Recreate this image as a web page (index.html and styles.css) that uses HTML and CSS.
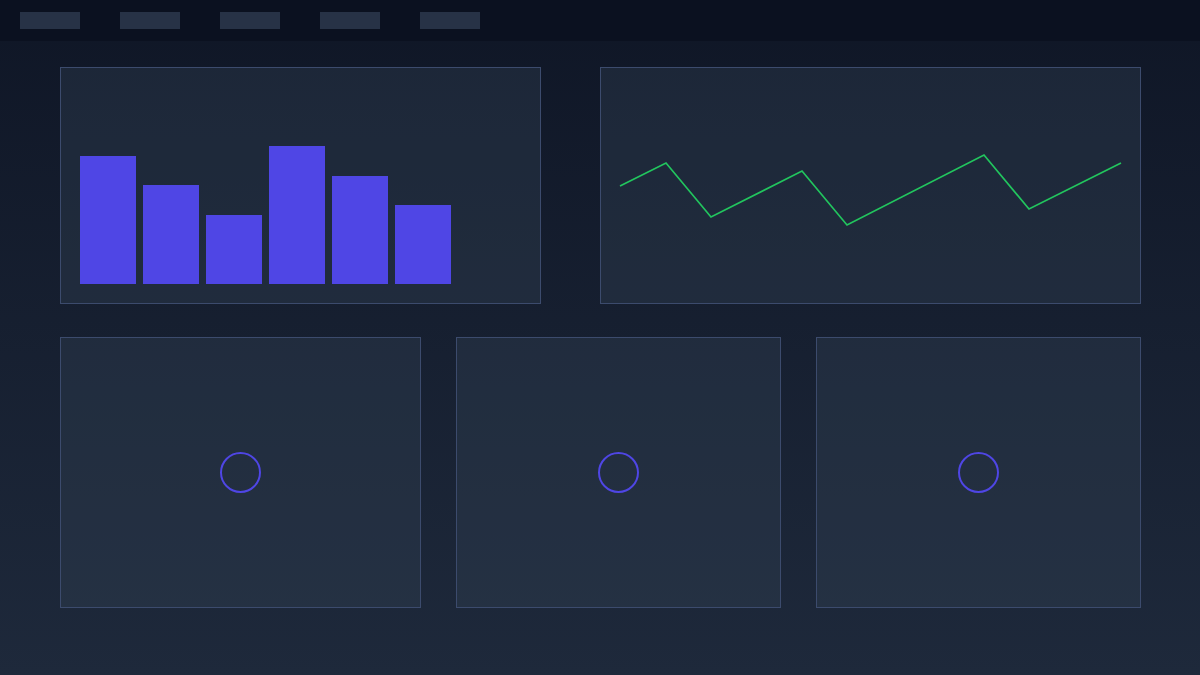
FILE: index.html
```html
<!DOCTYPE html>
<html>
<head>
    <title>Dashboard</title>
    <link rel="stylesheet" href="styles.css">
</head>
<body>

    <div class="navbar">
        <span class="nav-item"></span>
        <span class="nav-item"></span>
        <span class="nav-item"></span>
        <span class="nav-item"></span>
        <span class="nav-item"></span>
    </div>

    <div class="content">
        <div class="row top-row">
            <!-- bar chart -->
            <div class="card bar-card">
                <div class="bar" style="height: 128px"></div>
                <div class="bar" style="height: 99px"></div>
                <div class="bar" style="height: 69px"></div>
                <div class="bar" style="height: 138px"></div>
                <div class="bar" style="height: 108px"></div>
                <div class="bar" style="height: 79px"></div>
            </div>

            <!-- line chart -->
            <div class="card line-card">
                <svg class="line-chart" viewBox="0 0 540 236" width="540" height="236">
                    <polyline points="20,119 66,96 111,150 202,104 247,158 384,88 429,142 521,96"
                              fill="none" stroke="#22c55e" stroke-width="1.7" stroke-linejoin="miter"/>
                </svg>
            </div>
        </div>

        <div class="row bottom-row">
            <div class="card small-card">
                <span class="ring"></span>
            </div>
            <div class="card small-card">
                <span class="ring"></span>
            </div>
            <div class="card small-card">
                <span class="ring"></span>
            </div>
        </div>
    </div>

</body>
</html>
```

FILE: styles.css
```css
html {
    height: 100%;
}

body {
    margin: 0;
    padding: 0;
    min-height: 100%;
    font-family: "Liberation Sans", Arial, sans-serif;
    background: linear-gradient(to bottom, #0f1626 0%, #1e293b 100%);
    background-color: #1e293b;
}

.navbar {
    height: 41px;
    background-color: #0b1120;
    display: flex;
    align-items: center;
    gap: 40px;
    padding: 0 20px;
}

.nav-item {
    display: block;
    width: 60px;
    height: 17px;
    background-color: #273246;
}

.content {
    padding: 26px 59px 0 60px;
}

.row {
    display: grid;
}

.top-row {
    grid-template-columns: 481px 541px;
    column-gap: 59px;
    height: 237px;
}

.bottom-row {
    grid-template-columns: 361px 325px 325px;
    column-gap: 35px;
    height: 271px;
    margin-top: 33px;
}

.card {
    box-sizing: border-box;
    border: 1px solid #3c4b6d;
    background-color: rgba(51, 65, 85, 0.38);
}

.bar-card {
    display: flex;
    align-items: flex-end;
    gap: 7px;
    padding: 0 19px 19px 19px;
}

.bar {
    width: 56px;
    background-color: #4f46e5;
}

.line-card {
    overflow: hidden;
}

.line-chart {
    display: block;
    margin: -1px 0 0 -1px;
}

.small-card {
    display: flex;
    align-items: center;
    justify-content: center;
}

.ring {
    display: block;
    box-sizing: border-box;
    width: 41px;
    height: 41px;
    border: 2px solid #4f46e5;
    border-radius: 50%;
}
```
